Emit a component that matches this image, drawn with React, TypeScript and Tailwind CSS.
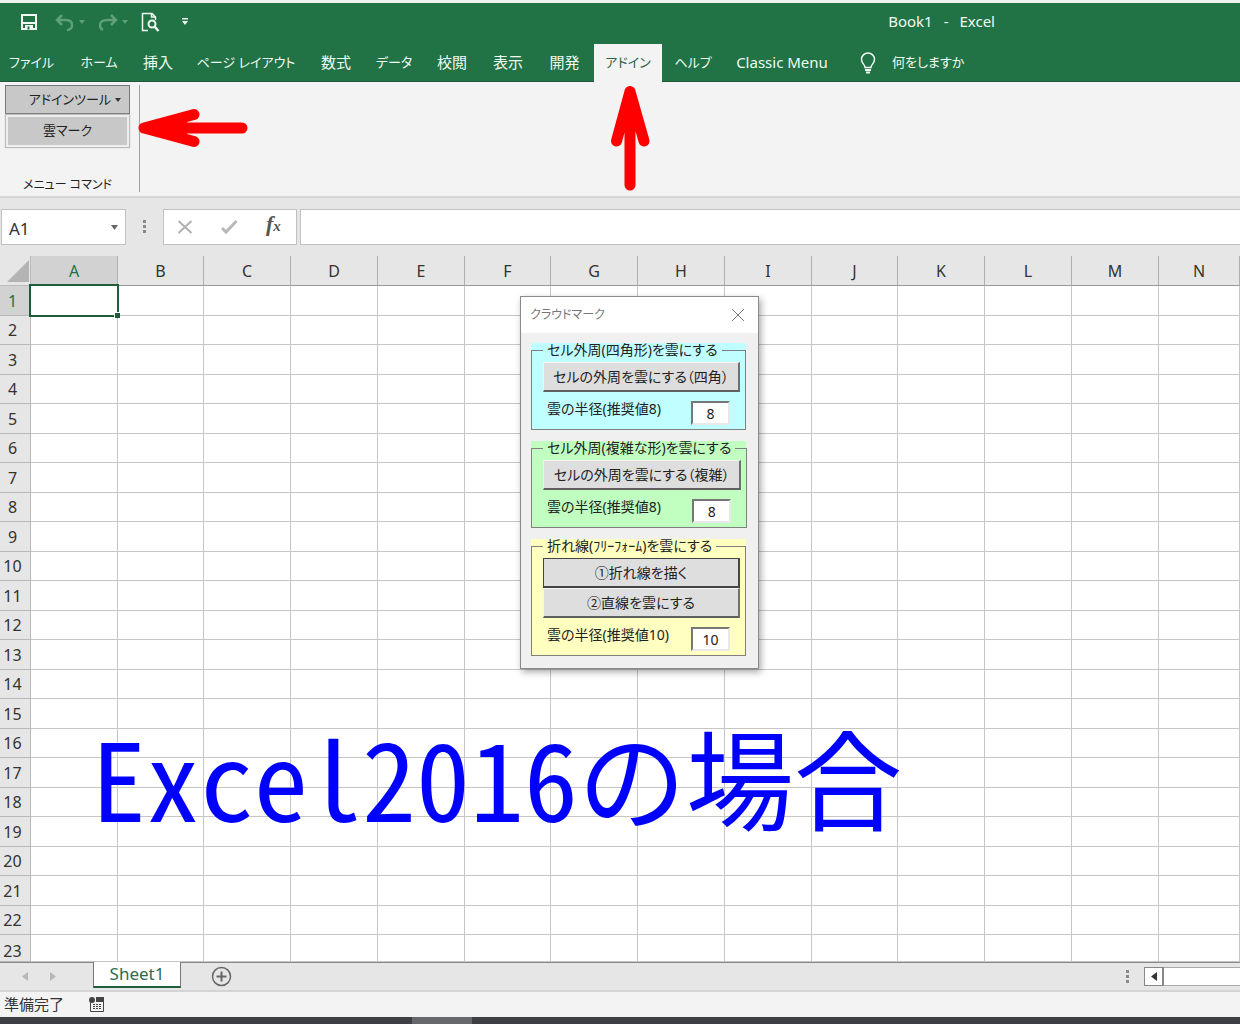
import { clsx } from 'clsx';

const tabs = [
  { label: 'ファイル', width: 'w-[63px]', kana: true },
  { label: 'ホーム', width: 'w-[72px]', kana: true },
  { label: '挿入', width: 'w-[46px]' },
  { label: 'ページ レイアウト', width: 'w-[130px]', kana: true },
  { label: '数式', width: 'w-[50px]' },
  { label: 'データ', width: 'w-[66px]', kana: true },
  { label: '校閲', width: 'w-[50px]' },
  { label: '表示', width: 'w-[62px]' },
  { label: '開発', width: 'w-[51px]' },
  { label: 'アドイン', width: 'w-[68px]', kana: true, active: true },
  { label: 'ヘルプ', width: 'w-[62px]', kana: true },
  { label: 'Classic Menu', width: 'w-[116px]' },
];

const columns = 'ABCDEFGHIJKLMN'.split('');
const rows = Array.from({ length: 23 }, (_, i) => i + 1);

function rowHeight(row: number) {
  if (row === 23) return 'h-[27px] align-bottom';
  return row % 2 ? 'h-[30px]' : 'h-[29px]';
}

function QuickAccess() {
  return (
    <div className="flex items-center pl-5">
      <button aria-label="上書き保存" className="w-[35px]">
        <svg width="18" height="18" viewBox="0 0 18 18" fill="none" stroke="#f0faf3" strokeWidth="2">
          <path d="M2 2h14v14H2zM3 10h12" />
          <path d="M5 12h8v4H5z" fill="#f0faf3" stroke="none" />
          <path d="M8.500 13.500v3" stroke="#217346" />
        </svg>
      </button>
      <button aria-label="元に戻す" className="flex w-[43px] items-center gap-1">
        <svg width="20" height="20" viewBox="0 0 20 20" fill="none" stroke="#5f9f7a" strokeWidth="2.500">
          <path d="M7 3 2 8l5 5M2 8h9c4 0 6 2 6 5s-2 5-5 5" />
        </svg>
        <svg width="6" height="4" viewBox="0 0 6 4" fill="#5f9f7a"><path d="M0 0h6L3 4z" /></svg>
      </button>
      <button aria-label="やり直し" className="flex w-[42px] items-center gap-1">
        <svg width="20" height="20" viewBox="0 0 20 20" fill="none" stroke="#5f9f7a" strokeWidth="2.500">
          <path d="m13 3 5 5-5 5M18 8H9c-4 0-7 2-7 5 0 2 1 4 3 5" />
        </svg>
        <svg width="6" height="4" viewBox="0 0 6 4" fill="#5f9f7a"><path d="M0 0h6L3 4z" /></svg>
      </button>
      <button aria-label="印刷プレビュー" className="w-[42px]">
        <svg width="20" height="20" viewBox="0 0 20 20" fill="none" stroke="#f0faf3">
          <path d="M8 18.500H2.500V1.500H12L15.500 5v3M11.500 1.500V5h4" strokeWidth="1.500" />
          <circle cx="12" cy="12" r="3.500" strokeWidth="2" />
          <path d="m14.500 14.500 4 4.500" strokeWidth="2.500" />
        </svg>
      </button>
      <button aria-label="クイック アクセス ツール バーのユーザー設定">
        <svg width="6" height="7" viewBox="0 0 6 7" fill="#f0faf3"><path d="M0 0h6v1.500H0zM0 3h6L3 7z" /></svg>
      </button>
    </div>
  );
}

function TitleAndTabs() {
  return (
    <header className="border-t-[3px] border-[#eef3f0] bg-[#217346] text-[#f0faf3]">
      <div className="flex h-[41px] items-center pb-1">
        <QuickAccess />
        <h1 className="mr-[245px] ml-auto flex gap-[11px] text-[15px]">
          <span>Book1</span>
          <span>-</span>
          <span>Excel</span>
        </h1>
      </div>
      <nav className="flex h-[38px] border-b border-[#1a5a37] text-[15px]">
        {tabs.map((tab) => (
          <button
            key={tab.label}
            className={clsx(
              'shrink-0 whitespace-nowrap',
              tab.width,
              tab.kana && 'text-[13px]',
              tab.label === '開発' && 'mr-1',
              tab.active && '-mb-px bg-[#f3f3f3] text-[#2f5f49]'
            )}
          >
            {tab.label}
          </button>
        ))}
        <button className="ml-5 flex items-center gap-4 text-[13px] whitespace-nowrap">
          <svg width="16" height="22" viewBox="0 0 16 22" fill="none" stroke="#f0faf3" strokeWidth="1.500">
            <path d="M5 15.500c0-3-3.500-4-3.500-8a6.500 6.500 0 0 1 13 0c0 4-3.500 5-3.500 8z" />
            <path d="M5 18h6M6 20.500h4" strokeWidth="2" />
          </svg>
          何をしますか
        </button>
      </nav>
    </header>
  );
}

function Ribbon() {
  return (
    <section className="flex h-[116px] border-b-2 border-[#d6d6d6] bg-[#f3f3f3] pt-[3px] pl-[5px] text-[13px] text-[#222]">
      <div className="flex h-[107px] w-[135px] flex-col border-r border-[#a0a0a0]">
        <button className="flex h-[29px] w-[125px] items-center justify-end gap-1 border border-[#777] bg-[#c8c8c8] pr-2">
          アドインツール
          <svg width="6" height="4" viewBox="0 0 6 4" fill="#333"><path d="M0 0h6L3 4z" /></svg>
        </button>
        <button className="mx-px mt-px h-8 w-[123px] border-2 border-[#eee] bg-[#c8c8c8] shadow-[0_0_1px_1px_#bbb]">
          雲マーク
        </button>
        <p className="mt-auto w-[125px] text-center text-[12px] leading-[14px]">メニュー コマンド</p>
      </div>
    </section>
  );
}

function Grip() {
  return (
    <svg width="4" height="14" viewBox="0 0 4 14" fill="#8a8a8a">
      <path d="M0 0h3v3H0zM0 5h3v3H0zM0 10h3v3H0z" />
    </svg>
  );
}

function FormulaBar() {
  return (
    <section className="flex h-[58px] items-start bg-[#e6e6e6] pt-[11px] pl-px">
      <div className="flex h-9 w-[125px] items-center border border-[#c0c0c0] bg-white pr-[7px] pl-[7px]">
        <input aria-label="名前ボックス" defaultValue="A1" className="w-full min-w-0 bg-transparent pt-1 text-[17px] text-[#333] outline-none" />
        <button aria-label="名前の一覧">
          <svg width="7" height="5" viewBox="0 0 7 5" fill="#666"><path d="M0 0h7L3.500 5z" /></svg>
        </button>
      </div>
      <div className="flex h-9 w-[37px] items-center justify-center"><Grip /></div>
      <div className="flex h-9 w-[134px] items-center gap-[28px] border border-[#c0c0c0] bg-white pl-[13px]">
        <button aria-label="キャンセル">
          <svg width="16" height="16" viewBox="0 0 16 16" fill="none" stroke="#b0b0b0" strokeWidth="2">
            <path d="m1.500 2 13 12M14.500 2l-13 12" />
          </svg>
        </button>
        <button aria-label="入力">
          <svg width="17" height="16" viewBox="0 0 17 16" fill="none" stroke="#b8b8b8" strokeWidth="3">
            <path d="m1 9 4 4L15.500 2" />
          </svg>
        </button>
        <button aria-label="関数の挿入" className="flex items-baseline pb-1 font-['Liberation_Serif',serif] text-[22px] leading-6 font-bold text-[#555] italic">
          f<span className="text-[15px]">x</span>
        </button>
      </div>
      <input aria-label="数式バー" className="ml-[3px] h-9 min-w-0 flex-1 border border-r-0 border-[#c0c0c0] bg-white px-2 outline-none" />
    </section>
  );
}

function SheetGrid() {
  return (
    <table className="w-full table-fixed border-separate border-spacing-0 text-[16px] leading-5 text-[#333]">
      <colgroup>
        <col className="w-[31px]" />
        {columns.slice(0, -1).map((c, i) => (
          <col key={c} className={i % 4 === 1 ? 'w-[86px]' : 'w-[87px]'} />
        ))}
        <col />
      </colgroup>
      <thead>
        <tr className="h-[30px] bg-[#e6e6e6]">
          <th className="border-r border-b border-[#bbb] p-0">
            <svg width="22" height="22" viewBox="0 0 22 22" className="ml-[7px]" fill="#b4b4b4"><path d="M22 0v22H0z" /></svg>
          </th>
          {columns.map((c) => (
            <th
              key={c}
              scope="col"
              className={clsx(
                'border-r border-b border-r-[#b0b0b0] border-b-[#999] p-0 font-normal',
                c === 'A' && 'bg-[#d2d2d2] text-[#217346]'
              )}
            >
              {c}
            </th>
          ))}
        </tr>
      </thead>
      <tbody>
        {rows.map((row) => (
          <tr key={row} className={rowHeight(row)}>
            <th
              scope="row"
              className={clsx(
                'border-r border-b border-[#b8b8b8] p-0 pr-[5px] font-normal',
                row === 1 ? 'bg-[#d2d2d2] text-[#217346]' : 'bg-[#e6e6e6]'
              )}
            >
              {row}
            </th>
            {columns.map((c) => (
              <td key={c} className="relative border-r border-b border-[#c6c6c6] bg-white p-0">
                {row === 1 && c === 'A' && (
                  <div className="absolute -inset-[2px] z-10 border-2 border-[#1e5c3a]">
                    <span className="absolute -right-[3px] -bottom-[3px] size-[6px] border-t border-l border-white bg-[#1e5c3a]" />
                  </div>
                )}
              </td>
            ))}
          </tr>
        ))}
      </tbody>
    </table>
  );
}

type CloudFrameProps = {
  title: string;
  color: string;
  buttons: string[];
  radiusLabel: string;
  radius: string;
  focusFirst?: boolean;
};

function CloudFrame({ title, color, buttons, radiusLabel, radius, focusFirst }: CloudFrameProps) {
  return (
    <div className={color}>
      <fieldset className="border border-[#808080] px-[11px] pb-1">
        <legend className="ml-0 px-1 leading-[14px] whitespace-nowrap">{title}</legend>
        <div className="-mr-[6px] flex flex-col pt-[5px]">
          {buttons.map((b, i) => (
            <button
              key={b}
              className={clsx(
                'h-[30px] border bg-[#dedede] whitespace-nowrap',
                focusFirst && i === 0
                  ? 'border-r-2 border-b-2 border-[#444]'
                  : 'border-t-[#f4f4f4] border-r-2 border-b-2 border-l-[#f4f4f4] border-r-[#707070] border-b-[#606060]'
              )}
            >
              {b}
            </button>
          ))}
          <label className="mt-[9px] flex items-start justify-between pr-[10px] pl-1 leading-4 whitespace-nowrap">
            {radiusLabel}
            <input
              defaultValue={radius}
              className="h-6 w-[39px] border-2 border-t-[#777] border-r-[#e8e8e8] border-b-[#e8e8e8] border-l-[#777] bg-white text-center outline-none"
            />
          </label>
        </div>
      </fieldset>
    </div>
  );
}

function CloudDialog() {
  return (
    <div
      role="dialog"
      aria-label="クラウドマーク"
      className="absolute top-[296px] left-[520px] z-20 w-[239px] border border-[#8a8a8a] bg-[#f0f0f0] text-[14px] text-[#222] shadow-[2px_3px_7px_rgba(0,0,0,0.35)]"
    >
      <div className="flex h-9 items-center justify-between bg-white pr-[13px] pl-[9px] text-[12px] text-[#777]">
        <span>クラウドマーク</span>
        <button aria-label="閉じる">
          <svg width="14" height="14" viewBox="0 0 14 14" fill="none" stroke="#777"><path d="m1 1 12 12M13 1 1 13" /></svg>
        </button>
      </div>
      <div className="flex flex-col gap-[11px] pt-[10px] pr-3 pb-3 pl-[10px]">
        <CloudFrame
          title="セル外周(四角形)を雲にする"
          color="bg-[#c0ffff]"
          buttons={['セルの外周を雲にする（四角）']}
          radiusLabel="雲の半径(推奨値8)"
          radius="8"
        />
        <CloudFrame
          title="セル外周(複雑な形)を雲にする"
          color="bg-[#c0ffc0]"
          buttons={['セルの外周を雲にする（複雑）']}
          radiusLabel="雲の半径(推奨値8)"
          radius="8"
        />
        <CloudFrame
          title="折れ線(ﾌﾘｰﾌｫｰﾑ)を雲にする"
          color="bg-[#ffffc0]"
          buttons={['①折れ線を描く', '②直線を雲にする']}
          radiusLabel="雲の半径(推奨値10)"
          radius="10"
          focusFirst
        />
      </div>
    </div>
  );
}

function SheetBar() {
  return (
    <section className="flex h-[30px] border-t border-b-2 border-t-[#888] border-b-[#d4d4d4] bg-[#e6e6e6]">
      <div className="flex w-[93px] items-center gap-[22px] pl-[22px]">
        <button aria-label="前のシート">
          <svg width="6" height="9" viewBox="0 0 6 9" fill="#b8b8b8"><path d="M6 0v9L0 4.500z" /></svg>
        </button>
        <button aria-label="次のシート">
          <svg width="6" height="9" viewBox="0 0 6 9" fill="#b8b8b8"><path d="M0 0v9l6-4.500z" /></svg>
        </button>
      </div>
      <button className="-mt-px h-[26px] w-[88px] border-x border-b-2 border-x-[#777] border-b-[#1e5c3a] bg-white text-[17px] leading-5 text-[#2f6b4c]">
        Sheet1
      </button>
      <button aria-label="新しいシート" className="ml-[30px]">
        <svg width="21" height="21" viewBox="0 0 21 21" fill="none" stroke="#666">
          <circle cx="10.500" cy="10.500" r="9" strokeWidth="1.500" />
          <path d="M5.500 10.500h10M10.500 5.500v10" strokeWidth="2" />
        </svg>
      </button>
      <div className="ml-auto flex items-center">
        <Grip />
        <button aria-label="左へスクロール" className="ml-[14px] flex h-[19px] w-5 items-center justify-center border border-r-2 border-[#888] bg-white">
          <svg width="6" height="9" viewBox="0 0 6 9" fill="#333"><path d="M6 0v9L0 4.500z" /></svg>
        </button>
        <div className="h-[19px] w-[76px] border-y border-[#aaa] bg-white" />
      </div>
    </section>
  );
}

function StatusBar() {
  return (
    <footer>
      <div className="flex h-[25px] items-center gap-[25px] bg-[#f3f3f3] pl-1 text-[15px] text-[#333]">
        <span>準備完了</span>
        <svg width="16" height="15" viewBox="0 0 16 15" fill="none" stroke="#444">
          <path d="M1.500 5v9.500h13V1" />
          <path d="M7 0h8v5H7z" fill="#444" stroke="none" />
          <circle cx="3" cy="3" r="3" fill="#444" stroke="none" />
          <path d="M4 7.500h9M4 9.500h9M4 11.500h9" strokeDasharray="2 1" />
        </svg>
      </div>
      <div className="h-[7px] bg-[#3d3f44] pl-[412px]">
        <div className="h-full w-[60px] bg-[#66686c]" />
      </div>
    </footer>
  );
}

function Annotations() {
  return (
    <>
      <svg className="absolute top-[108px] left-[138px] z-20" width="111" height="40" viewBox="0 0 111 40" fill="#f00" stroke="#f00" strokeLinejoin="round" strokeLinecap="round">
        <path d="M6 20 56 6.500M6 20l50 13.500M6 20h98" strokeWidth="11" />
        <path d="M6 20 46 11v18z" strokeWidth="6" />
      </svg>
      <svg className="absolute top-[85px] left-[610px] z-20" width="40" height="106" viewBox="0 0 40 106" fill="#f00" stroke="#f00" strokeLinejoin="round" strokeLinecap="round">
        <path d="M20 6.500 6.500 56M20 6.500 34 56M20 6.500V100" strokeWidth="11" />
        <path d="M20 6 11 44h18z" strokeWidth="6" />
      </svg>
      <p className="absolute top-[711px] left-[92px] z-10 text-[108px] leading-[128px] whitespace-nowrap text-[#00f] [font-feature-settings:'hwid'] font-['Noto_Sans_CJK_JP',sans-serif]">
        Excel2016の場合
      </p>
    </>
  );
}

export default function App() {
  return (
    <div className="relative min-h-screen overflow-hidden bg-[#e6e6e6] font-['Noto_Sans','Noto_Sans_CJK_JP',sans-serif] [font-feature-settings:'palt']">
      <TitleAndTabs />
      <Ribbon />
      <FormulaBar />
      <SheetGrid />
      <SheetBar />
      <StatusBar />
      <CloudDialog />
      <Annotations />
    </div>
  );
}
